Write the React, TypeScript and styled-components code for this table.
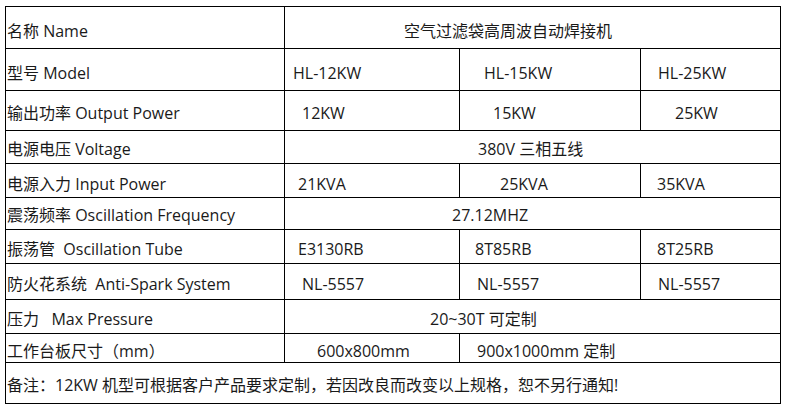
import React from "react";
import styled, { createGlobalStyle } from "styled-components";

const Global = createGlobalStyle`
  html, body { margin: 0; padding: 0; background: #ffffff; }
  body {
    font-family: "Open Sans", "Noto Sans CJK SC", sans-serif;
    color: #1a1a1a;
  }
`;

const Page = styled.div`
  padding: 6px 0 0 5px;
  width: 786px;
  height: 409px;
  box-sizing: border-box;
  overflow: hidden;
`;

const Sheet = styled.div`
  width: 776px;
  box-sizing: border-box;
  border-top: 1px solid #000;
  border-left: 1px solid #000;
  font-size: 16px;
  line-height: 20px;
`;

const Row = styled.div<{ $h: number }>`
  display: grid;
  grid-template-columns: 279px 175px 181px 140px;
  height: ${(p) => p.$h}px;
`;

const BaseCell = styled.div<{ $pt: number; $pl: number }>`
  box-sizing: border-box;
  border-right: 1px solid #000;
  border-bottom: 1px solid #000;
  padding: ${(p) => p.$pt}px 0 0 ${(p) => p.$pl}px;
  white-space: pre;
  overflow: hidden;
`;

const LabelCell = styled(BaseCell)`
  grid-column: 1;
`;

const ValueCell = styled(BaseCell)<{ $span: number }>`
  grid-column: span ${(p) => p.$span};
`;

const NoteCell = styled(BaseCell)`
  grid-column: 1 / -1;
`;

type V = { t: string; pl: number; span?: number };
type R = { h: number; pt: number; label: string; values: V[] };

const rows: R[] = [
  { h: 42, pt: 14, label: "名称 Name", values: [{ t: "空气过滤袋高周波自动焊接机", pl: 119, span: 3 }] },
  { h: 42, pt: 14, label: "型号 Model", values: [{ t: "HL-12KW", pl: 8 }, { t: "HL-15KW", pl: 24 }, { t: "HL-25KW", pl: 17 }] },
  { h: 40, pt: 12, label: "输出功率 Output Power", values: [{ t: "12KW", pl: 17 }, { t: "15KW", pl: 33 }, { t: "25KW", pl: 34 }] },
  { h: 33, pt: 8, label: "电源电压 Voltage", values: [{ t: "380V 三相五线", pl: 193, span: 3 }] },
  { h: 34, pt: 10, label: "电源入力 Input Power", values: [{ t: "21KVA", pl: 13 }, { t: "25KVA", pl: 40 }, { t: "35KVA", pl: 16 }] },
  { h: 32, pt: 7, label: "震荡频率 Oscillation Frequency", values: [{ t: "27.12MHZ", pl: 167, span: 3 }] },
  { h: 34, pt: 9, label: "振荡管  Oscillation Tube", values: [{ t: "E3130RB", pl: 13 }, { t: "8T85RB", pl: 15 }, { t: "8T25RB", pl: 16 }] },
  { h: 36, pt: 10, label: "防火花系统  Anti-Spark System", values: [{ t: "NL-5557", pl: 17 }, { t: "NL-5557", pl: 17 }, { t: "NL-5557", pl: 17 }] },
  { h: 34, pt: 9, label: "压力   Max Pressure", values: [{ t: "20~30T 可定制", pl: 145, span: 3 }] },
  { h: 29, pt: 7, label: "工作台板尺寸（mm）", values: [{ t: "600x800mm", pl: 32 }, { t: "900x1000mm 定制", pl: 17, span: 2 }] },
];

const note = "备注：12KW 机型可根据客户产品要求定制，若因改良而改变以上规格，恕不另行通知!";

export default function App() {
  return (
    <Page>
      <Global />
      <Sheet>
        {rows.map((r, i) => (
          <Row key={i} $h={r.h}>
            <LabelCell $pt={r.pt} $pl={1}>
              {r.label}
            </LabelCell>
            {r.values.map((v, j) => (
              <ValueCell key={j} $span={v.span ?? 1} $pt={r.pt} $pl={v.pl}>
                {v.t}
              </ValueCell>
            ))}
          </Row>
        ))}
        <Row $h={41}>
          <NoteCell $pt={12} $pl={1}>
            {note}
          </NoteCell>
        </Row>
      </Sheet>
    </Page>
  );
}
